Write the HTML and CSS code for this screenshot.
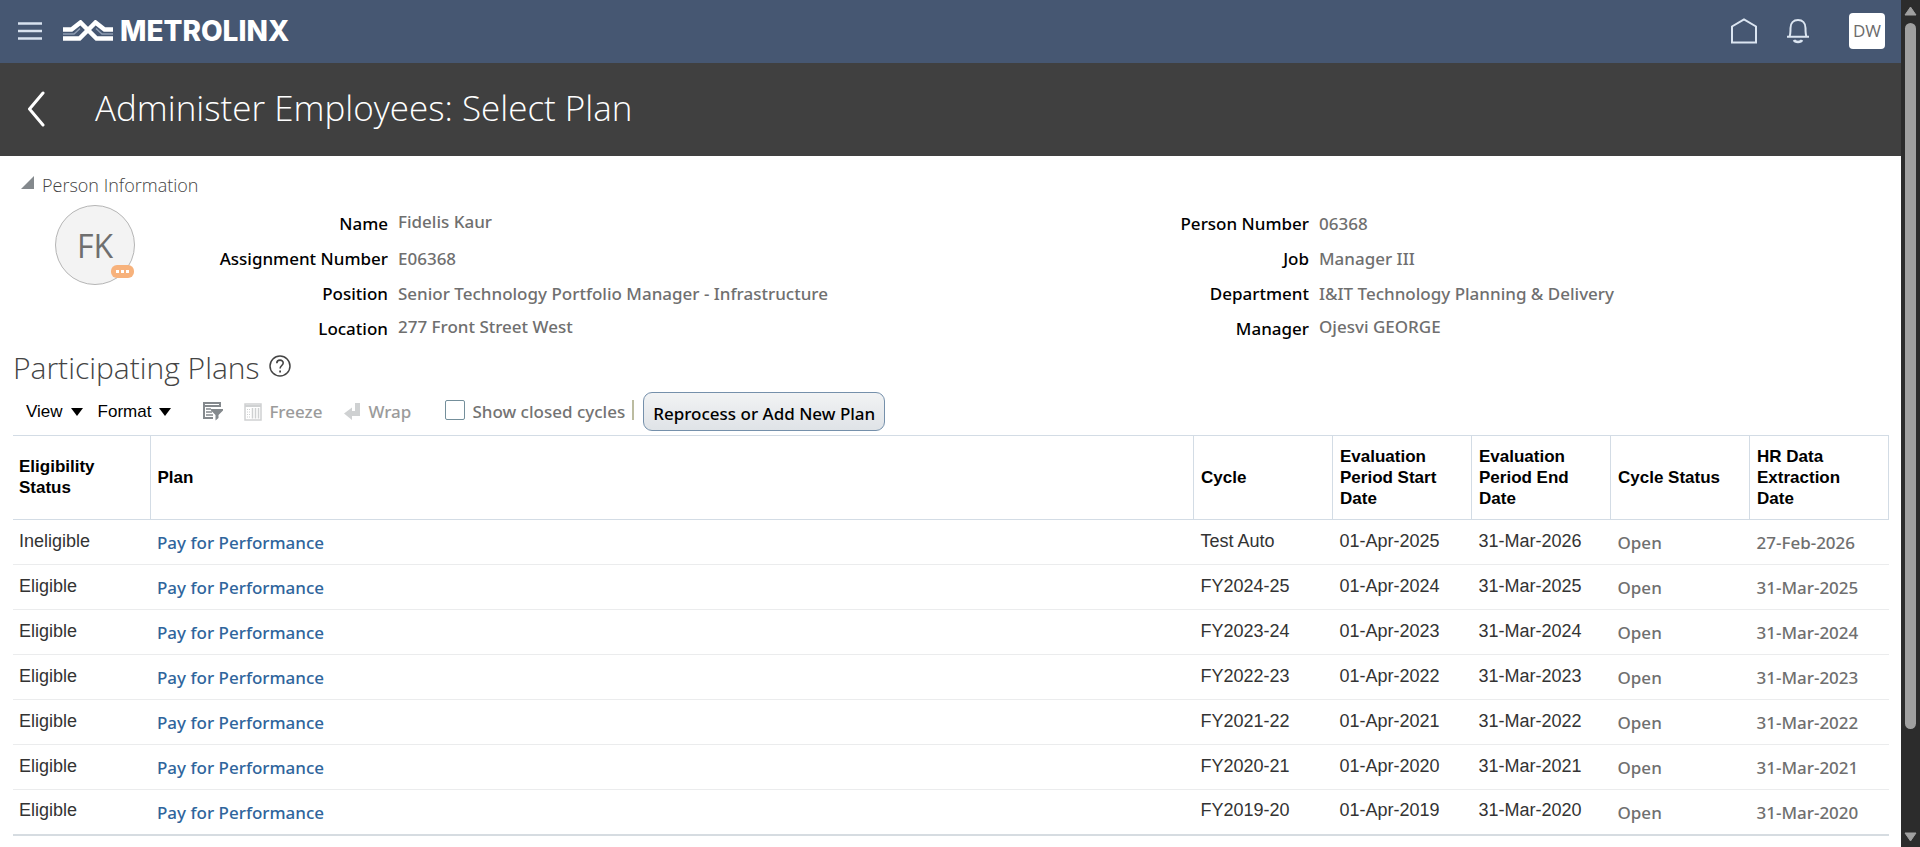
FILE: index.html
```html
<!DOCTYPE html>
<html lang="en">
<head>
<meta charset="utf-8">
<title>Administer Employees: Select Plan</title>
<link rel="stylesheet" href="styles.css">
</head>
<body>
<div class="shell">
  <div class="page">
    <header class="topbar">
      <button class="icon-btn menu" aria-label="Navigator">
        <svg width="24" height="20" viewBox="0 0 24 20"><path d="M0 2.500h24M0 10h24M0 17.500h24" stroke="#d8e2ef" stroke-width="2.500"/></svg>
      </button>
      <a class="brand" href="#">
        <svg width="50" height="22" viewBox="0 0 50 22" fill="none" stroke="#fff">
          <path d="M0 9.500H8.500L17.500 2.500L33.500 18.500H50" stroke-width="4.500"/>
          <path d="M0 18.500H16.500L32.500 2.500L41.500 9.500H50" stroke-width="4.500"/>
          <path d="M0 14H11L17 8.500M50 14H39L33 8.500" stroke="#8f9db3" stroke-width="1.500"/>
        </svg>
        <span class="brand-name">METROLINX</span>
      </a>
      <nav class="actions">
        <button class="icon-btn home" aria-label="Home">
          <svg width="28" height="28" viewBox="0 0 28 28" fill="none" stroke="#dbe5f1" stroke-width="2"><path d="M2 25.500V9.500L14 2.500L26 9.500V25.500Z"/></svg>
        </button>
        <button class="icon-btn bell" aria-label="Notifications">
          <svg width="22" height="26" viewBox="0 0 22 26" fill="none" stroke="#dbe5f1" stroke-width="2"><path d="M0 18.700H22M2.500 18.500C3.500 16.500 3.500 14 3.500 10C3.500 5 6.500 2 11 2S18.500 5 18.500 10C18.500 14 18.500 16.500 19.500 18.500"/><path d="M7 22C8 24.600 14 24.600 15 22" stroke-width="2.500"/></svg>
        </button>
        <button class="user">DW</button>
      </nav>
    </header>

    <div class="titlebar">
      <button class="icon-btn back" aria-label="Back">
        <svg width="18" height="36" viewBox="0 0 18 36" fill="none" stroke="#fff" stroke-width="3" stroke-linecap="round" stroke-linejoin="round"><path d="M16 2L2.500 18L16 34"/></svg>
      </button>
      <h1>Administer Employees: Select Plan</h1>
    </div>

    <main class="content">
      <section class="person">
        <h2 class="person-head"><svg width="13" height="19" viewBox="0 0 13 19"><path d="M13 0V13H0Z" fill="#84898d"/></svg>Person Information</h2>
        <div class="person-body">
          <div class="avatar">FK
            <span class="badge"><i></i><i></i><i></i></span>
          </div>
          <dl class="facts facts-left">
            <dt>Name</dt><dd class="raised">Fidelis Kaur</dd>
            <dt>Assignment Number</dt><dd>E06368</dd>
            <dt>Position</dt><dd>Senior Technology Portfolio Manager - Infrastructure</dd>
            <dt>Location</dt><dd class="raised">277 Front Street West</dd>
          </dl>
          <dl class="facts facts-right">
            <dt>Person Number</dt><dd>06368</dd>
            <dt>Job</dt><dd>Manager III</dd>
            <dt>Department</dt><dd>I&amp;IT Technology Planning &amp; Delivery</dd>
            <dt>Manager</dt><dd class="raised">Ojesvi GEORGE</dd>
          </dl>
        </div>
      </section>

      <section class="plans">
        <div class="plans-head">
          <h2>Participating Plans</h2>
          <button class="icon-btn" aria-label="Help">
            <svg width="22" height="22" viewBox="0 0 22 22" fill="none" stroke="#444"><circle cx="11" cy="11" r="10" stroke-width="1.500"/><path d="M7.800 8.200C7.800 4 14.300 4.200 14.200 8C14.100 10.500 11.100 10.600 11.100 13.600" stroke-width="1.600"/><path d="M11.100 15.500V17.500" stroke-width="1.800"/></svg>
          </button>
        </div>
        <div class="toolbar">
          <button class="menu-btn view">View <span class="caret"></span></button>
          <button class="menu-btn format">Format <span class="caret"></span></button>
          <button class="icon-btn filter" aria-label="Query By Example">
            <svg width="20" height="19" viewBox="0 0 20 19"><path d="M0 0H18V5H0ZM0 5H2V17H0ZM2 15H10V17H2Z" fill="#84898d"/><path d="M2 2.500H16" stroke="#fff"/><path d="M3 7H8M3 10H9M3 13H10" stroke="#84898d" stroke-width="1.500"/><path d="M8 7H20V8.500L15.500 13V16L12.500 18.500V13L8 8.500Z" fill="#84898d"/></svg>
          </button>
          <button class="tool freeze" disabled>
            <svg width="18" height="18" viewBox="0 0 18 18" fill="none" stroke="#cfd1d2"><rect x="1" y="1" width="16" height="16" stroke-width="1.500"/><path d="M1 3H17" stroke-width="2"/><path d="M3 6.500H6M3 9H6M3 11.500H6M3 14H6" stroke-dasharray="1 1"/><path d="M8.500 5V15.500M11.500 5V15.500M14.500 5V15.500" stroke-width="1.500"/></svg>
            Freeze
          </button>
          <button class="tool wrap" disabled>
            <svg width="16" height="17" viewBox="0 0 16 17"><path d="M11 0H16V13H8V17L0 10.500L8 4.500V8H11Z" fill="#cfd1d2"/></svg>
            Wrap
          </button>
          <label class="check"><input type="checkbox"><span>Show closed cycles</span></label>
          <span class="sep"></span>
          <button class="primary">Reprocess or Add New Plan</button>
        </div>

        <table class="grid">
          <colgroup><col class="c-status"><col><col class="c-data"><col class="c-data"><col class="c-data"><col class="c-data"><col class="c-data"></colgroup>
          <thead>
            <tr><th>Eligibility Status</th><th>Plan</th><th>Cycle</th><th>Evaluation Period Start Date</th><th>Evaluation Period End Date</th><th>Cycle Status</th><th>HR Data Extraction Date</th></tr>
          </thead>
          <tbody>
            <tr><td>Ineligible</td><td class="link"><a href="#">Pay for Performance</a></td><td>Test Auto</td><td>01-Apr-2025</td><td>31-Mar-2026</td><td class="soft">Open</td><td class="soft">27-Feb-2026</td></tr>
            <tr><td>Eligible</td><td class="link"><a href="#">Pay for Performance</a></td><td>FY2024-25</td><td>01-Apr-2024</td><td>31-Mar-2025</td><td class="soft">Open</td><td class="soft">31-Mar-2025</td></tr>
            <tr><td>Eligible</td><td class="link"><a href="#">Pay for Performance</a></td><td>FY2023-24</td><td>01-Apr-2023</td><td>31-Mar-2024</td><td class="soft">Open</td><td class="soft">31-Mar-2024</td></tr>
            <tr><td>Eligible</td><td class="link"><a href="#">Pay for Performance</a></td><td>FY2022-23</td><td>01-Apr-2022</td><td>31-Mar-2023</td><td class="soft">Open</td><td class="soft">31-Mar-2023</td></tr>
            <tr><td>Eligible</td><td class="link"><a href="#">Pay for Performance</a></td><td>FY2021-22</td><td>01-Apr-2021</td><td>31-Mar-2022</td><td class="soft">Open</td><td class="soft">31-Mar-2022</td></tr>
            <tr><td>Eligible</td><td class="link"><a href="#">Pay for Performance</a></td><td>FY2020-21</td><td>01-Apr-2020</td><td>31-Mar-2021</td><td class="soft">Open</td><td class="soft">31-Mar-2021</td></tr>
            <tr><td>Eligible</td><td class="link"><a href="#">Pay for Performance</a></td><td>FY2019-20</td><td>01-Apr-2019</td><td>31-Mar-2020</td><td class="soft">Open</td><td class="soft">31-Mar-2020</td></tr>
          </tbody>
        </table>
      </section>
    </main>
  </div>
  <div class="scrollbar" aria-hidden="true">
    <svg width="13" height="10" viewBox="0 0 13 10"><path d="M6.500 1L12 9H1Z" fill="#a0a0a0" stroke="#a0a0a0" stroke-linejoin="round"/></svg>
    <div class="track"><div class="thumb"></div></div>
    <svg width="13" height="10" viewBox="0 0 13 10"><path d="M6.500 9L12 1H1Z" fill="#a0a0a0" stroke="#a0a0a0" stroke-linejoin="round"/></svg>
  </div>
</div>
</body>
</html>
```
FILE: styles.css
```css
* { box-sizing: border-box; }
body {
  margin: 0;
  background: #fff;
  color: #333;
  font-family: "Liberation Sans", Arial, sans-serif;
  font-size: 17px;
}
h1, h2, dl, dd { margin: 0; }
button {
  border: 0;
  padding: 0;
  background: none;
  color: inherit;
  font: inherit;
}
svg { display: block; flex: none; }

.shell { display: flex; height: 100vh; }
.page { flex: 1; min-width: 0; overflow: hidden; }

.topbar {
  display: flex;
  align-items: center;
  height: 63px;
  padding: 0 16px 1px 18px;
  background: #465772;
}
.brand {
  display: flex;
  align-items: center;
  gap: 7px;
  margin-left: 21px;
  color: #fff;
  text-decoration: none;
}
.brand-name {
  font: 800 28px/30px Inter, sans-serif;
}
.actions { display: flex; align-items: center; margin-left: auto; }
.bell { margin-left: 29px; }
.user {
  width: 36px;
  height: 36px;
  margin-left: 40px;
  border-radius: 4px;
  background: #fff;
  color: #6b6b6b;
  font: 400 17px/36px "Open Sans", sans-serif;
}

.titlebar {
  display: flex;
  align-items: center;
  gap: 50px;
  height: 93px;
  padding: 0 27px 2px;
  background: #404040;
  color: #fff;
}
h1 { padding-bottom: 2px; font: 300 35px/48px "Open Sans", sans-serif; }

.content { padding: 13px 12px 0 13px; }
.person-head {
  display: flex;
  align-items: center;
  gap: 8px;
  padding-left: 8px;
  color: #444;
  font: 300 18px/32px "Open Sans", sans-serif;
}
.person-body { display: flex; padding: 4px 0 0 42px; }
.avatar {
  position: relative;
  flex: none;
  width: 80px;
  height: 80px;
  border: 1px solid #b5b5b5;
  border-radius: 50%;
  background: #f3f3f3;
  color: #6f6f6f;
  font: 400 32px/80px "Open Sans", sans-serif;
  text-align: center;
}
.badge {
  position: absolute;
  right: 0;
  bottom: 6px;
  display: flex;
  align-items: center;
  justify-content: center;
  gap: 2px;
  width: 23px;
  height: 13px;
  border-radius: 6px;
  background: #f7b27c;
}
.badge i { width: 3px; height: 3px; background: #fff; }
.facts {
  display: grid;
  flex: 1;
  grid-auto-rows: 35px;
  column-gap: 10px;
  font: 500 17px/37px "Noto Sans", sans-serif;
}
.facts dt { color: #000; text-align: right; white-space: nowrap; }
.facts dd { color: #6f6f6f; white-space: nowrap; }
.facts .raised { line-height: 33px; }
.facts-left { grid-template-columns: 253px 1fr; }
.facts-right { grid-template-columns: 297px 1fr; }

.plans-head { display: flex; align-items: center; gap: 9px; padding-top: 3px; }
.plans-head h2 { color: #444; font: 300 30px/40px "Open Sans", sans-serif; }
.plans-head .icon-btn { padding-bottom: 4px; }
.toolbar { display: flex; align-items: center; height: 47px; padding-left: 13px; }
.menu-btn {
  display: flex;
  align-items: center;
  gap: 8px;
  color: #000;
}
.format { margin-left: 15px; }
.caret {
  border: 6px solid transparent;
  border-top: 8px solid #000;
  border-bottom: 0;
}
.filter { margin-left: 32px; }
.tool, .check, .primary { font: 500 17px/24px "Noto Sans", sans-serif; }
.tool {
  display: flex;
  align-items: center;
  gap: 7px;
  color: #9b9b9b;
}
.freeze { margin-left: 21px; }
.wrap { margin-left: 22px; gap: 8px; }
.check {
  display: flex;
  align-items: center;
  gap: 7px;
  margin-left: 34px;
  color: #737373;
}
.check input {
  appearance: none;
  width: 20px;
  height: 20px;
  margin: 0 0 3px;
  border: 1px solid #748f9b;
  border-radius: 2px;
  background: #fff;
}
.sep { width: 2px; height: 20px; margin: 0 0 3px 7px; background: #bcbca0; }
.primary {
  height: 39px;
  margin-left: 9px;
  padding: 5px 9px 0;
  border: 1px solid #7590ab;
  border-radius: 9px;
  background: linear-gradient(#f2f3f4, #dfe3e7);
  color: #000;
}

.grid {
  width: 100%;
  table-layout: fixed;
  border-collapse: collapse;
  border-bottom: 2px solid #d6dce1;
}
.c-status { width: 137px; }
.c-data { width: 139px; }
.grid th {
  height: 84px;
  padding: 0 10px 1px 7px;
  border: 1px solid #d3dce5;
  border-left: 0;
  color: #000;
  font-weight: 700;
  line-height: 21px;
  text-align: left;
}
.grid td {
  height: 45px;
  padding: 0 6px 2px 7px;
  border-bottom: 1px solid #ebeced;
  font-size: 18px;
}
.grid th:first-child, .grid td:first-child { padding-left: 6px; }
.grid .link, .grid .soft { padding-top: 2px; padding-bottom: 0; font: 500 17px/24px "Noto Sans", sans-serif; }
.grid a { color: #2f659c; text-decoration: none; }
.grid .soft { color: #6f6f6f; }

.scrollbar {
  display: flex;
  flex: none;
  flex-direction: column;
  align-items: center;
  gap: 7px;
  width: 19px;
  padding: 6px 0 5px;
  background: #2c2c2c;
}
.track { flex: 1; }
.thumb { width: 11px; height: 88%; border-radius: 6px; background: #a0a0a0; }
```
